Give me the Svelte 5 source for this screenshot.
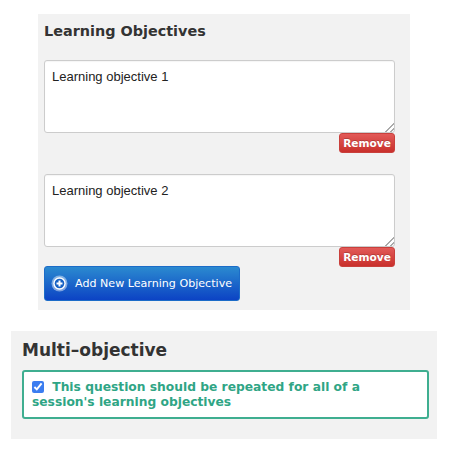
<script>
  let objectives = ['Learning objective 1', 'Learning objective 2'];
  let repeated = true;
</script>

<div class="page">
  <section class="panel objectives">
    <h3>Learning Objectives</h3>
    {#each objectives as objective}
      <div class="objective">
        <textarea value={objective}></textarea>
        <button class="remove">Remove</button>
      </div>
    {/each}
    <button class="add">
      <svg width="17" height="17" viewBox="0 0 17 17" aria-hidden="true">
        <circle cx="8.5" cy="8.5" r="8" fill="#fff" fill-opacity="0.45" />
        <circle cx="8.5" cy="8.5" r="6.2" fill="#fff" />
        <circle cx="8.5" cy="8.5" r="4.8" fill="#1560c4" />
        <path d="M8.5 5.5v6M5.5 8.5h6" stroke="#fff" stroke-width="2" />
      </svg>
      Add New Learning Objective
    </button>
  </section>

  <section class="panel multi">
    <h3>Multi–objective</h3>
    <label class="repeat">
      <input type="checkbox" bind:checked={repeated} />
      This question should be repeated for all of a session's learning objectives
    </label>
  </section>
</div>

<style>
  :global(body) {
    background: #fff;
  }

  .page {
    width: 450px;
    height: 460px;
    padding-top: 14px;
    box-sizing: border-box;
    font-family: 'DejaVu Sans', sans-serif;
    overflow: hidden;
  }

  .panel {
    background: #f2f2f2;
    box-sizing: border-box;
  }

  .objectives {
    width: 372px;
    height: 296px;
    margin-left: 38px;
    padding: 8px 15px 0 6px;
  }

  .multi {
    width: 426px;
    height: 108px;
    margin: 21px 0 0 11px;
    padding: 9px 8px 0 11px;
  }

  h3 {
    margin: 0;
    color: #333;
    font-weight: bold;
  }

  .objectives h3 {
    font-size: 14.4px;
    line-height: 18px;
    margin-bottom: 20px;
  }

  .multi h3 {
    font-size: 17px;
    line-height: 21px;
    margin-bottom: 9px;
  }

  .objective {
    display: flex;
    flex-direction: column;
    align-items: flex-end;
    margin-bottom: 21px;
  }

  .objective:nth-of-type(2) {
    margin-bottom: -1px;
  }

  textarea {
    display: block;
    width: 100%;
    height: 73px;
    box-sizing: border-box;
    margin: 0;
    padding: 7px;
    background: #fff;
    border: 1px solid #ccc;
    border-radius: 3px;
    color: #222;
    font-family: 'Liberation Sans', Arial, sans-serif;
    font-size: 13px;
    line-height: 18px;
    box-shadow: inset 0 1px 1px rgba(0, 0, 0, 0.04);
    outline: none;
  }

  textarea::-webkit-resizer {
    background: linear-gradient(135deg, transparent 46%, #aaa 46%, #aaa 56%, transparent 56%, transparent 74%, #aaa 74%, #aaa 84%, transparent 84%) right bottom / 9px 9px no-repeat;
  }

  button {
    font-family: 'DejaVu Sans', sans-serif;
    font-weight: bold;
    color: #fff;
    border-radius: 3px;
    cursor: pointer;
  }

  .remove {
    width: 56px;
    height: 20px;
    padding: 0;
    font-size: 10.6px;
    background: linear-gradient(#e25a58, #c9302c);
    border: 1px solid #c9403c;
    text-shadow: 0 -1px 0 rgba(0, 0, 0, 0.2);
  }

  .add {
    display: flex;
    align-items: center;
    gap: 7px;
    width: 196px;
    height: 35px;
    padding: 0 0 0 6px;
    font-size: 11.1px;
    font-weight: normal;
    white-space: nowrap;
    background: linear-gradient(#2b8ad0, #0c43c4);
    border: 1px solid #1c6cc8;
  }

  .repeat {
    display: block;
    height: 49px;
    box-sizing: border-box;
    padding: 8px;
    background: #fff;
    border: 2px solid #3fae90;
    border-radius: 3px;
    color: #2fa585;
    font-size: 12.27px;
    font-weight: bold;
    line-height: 15px;
  }

  .repeat input {
    width: 12px;
    height: 12px;
    margin: 0 4px 0 0;
    vertical-align: -2px;
    accent-color: #3b7df0;
  }
</style>
